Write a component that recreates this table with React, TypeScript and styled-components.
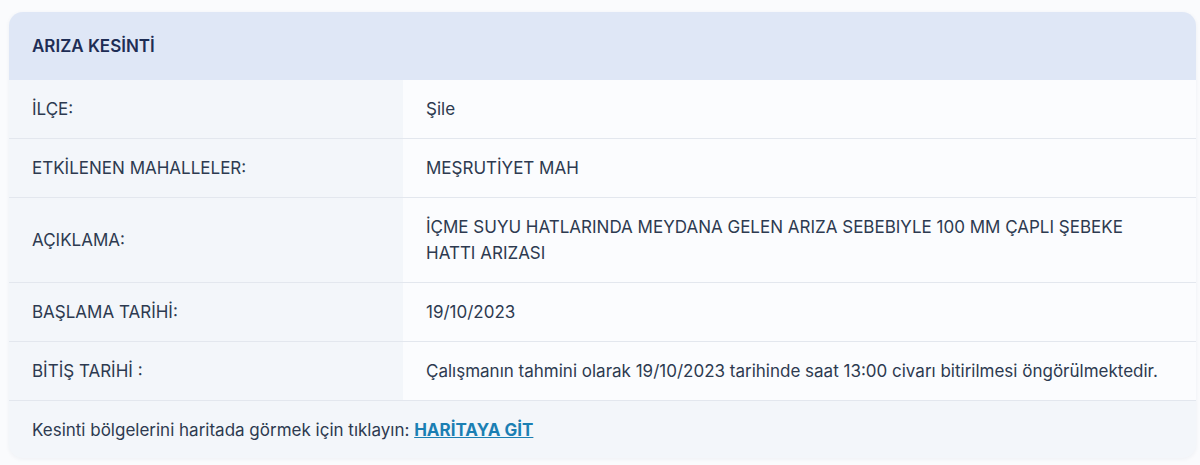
import React from 'react';
import styled, { createGlobalStyle } from 'styled-components';

const GlobalStyle = createGlobalStyle`
  html, body {
    margin: 0;
    padding: 0;
    background: #fafbfd;
  }

  body {
    font-family: Inter, 'Noto Sans', sans-serif;
    -webkit-font-smoothing: antialiased;
  }
`;

type Row = { label: string; value: string };

const rows: Row[] = [
  { label: 'İLÇE:', value: 'Şile' },
  { label: 'ETKİLENEN MAHALLELER:', value: 'MEŞRUTİYET MAH' },
  {
    label: 'AÇIKLAMA:',
    value: 'İÇME SUYU HATLARINDA MEYDANA GELEN ARIZA SEBEBIYLE 100 MM ÇAPLI ŞEBEKE HATTI ARIZASI',
  },
  { label: 'BAŞLAMA TARİHİ:', value: '19/10/2023' },
  {
    label: 'BİTİŞ TARİHİ :',
    value: 'Çalışmanın tahmini olarak 19/10/2023 tarihinde saat 13:00 civarı bitirilmesi öngörülmektedir.',
  },
];

const App = () => {
  return (
    <Page>
      <GlobalStyle />
      <Card>
        <Header>ARIZA KESİNTİ</Header>
        {rows.map((row) => (
          <InfoRow key={row.label}>
            <Label>{row.label}</Label>
            <Value>
              <ValueText>{row.value}</ValueText>
            </Value>
          </InfoRow>
        ))}
        <Footer>
          Kesinti bölgelerini haritada görmek için tıklayın:{' '}
          <MapLink href="#">HARİTAYA GİT</MapLink>
        </Footer>
      </Card>
    </Page>
  );
};

const Page = styled.div`
  padding: 12px 4px 5px 9px;
`;

const Card = styled.div`
  overflow: hidden;
  border-radius: 14px;
  background-color: #f3f6fa;
  box-shadow: 0 1px 4px rgb(30 50 90 / 0.06);
`;

const Header = styled.div`
  padding: 21px 23px;
  background-color: #dfe7f6;
  color: #1e2d55;
  font-size: 17px;
  font-weight: 600;
  line-height: 26px;
`;

const InfoRow = styled.div`
  display: grid;
  grid-template-columns: 394px 1fr;
  border-bottom: 1px solid #e3e7ee;
`;

const Label = styled.div`
  display: flex;
  align-items: center;
  padding: 16px 23px;
  color: #2d3a50;
  font-size: 17px;
  line-height: 26px;
`;

const Value = styled.div`
  padding: 16px 23px;
  background-color: #fbfcfe;
  color: #2d3a50;
  font-size: 17px;
  line-height: 26px;
`;

const ValueText = styled.p`
  margin: 0;
  max-width: 742px;
`;

const Footer = styled.div`
  padding: 16px 23px 15px;
  color: #2d3a50;
  font-size: 17px;
  line-height: 26px;
`;

const MapLink = styled.a`
  color: #1b7fb3;
  font-weight: 700;
  text-decoration: underline;
`;

export default App;
